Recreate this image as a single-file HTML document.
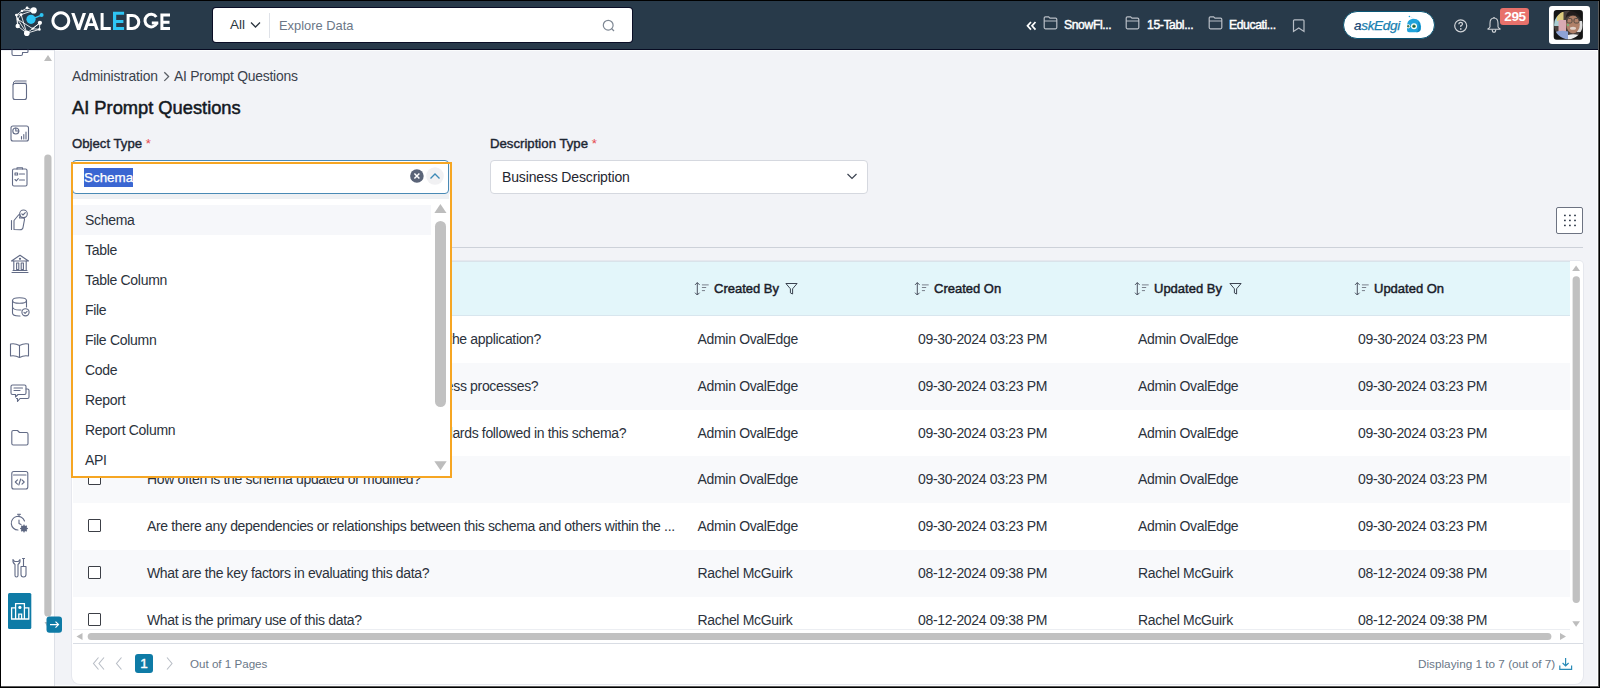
<!DOCTYPE html>
<html><head><meta charset="utf-8">
<style>
*{box-sizing:border-box;margin:0;padding:0}
html,body{width:1600px;height:688px;overflow:hidden;background:#000}
body{font-family:"Liberation Sans",sans-serif;position:relative;color:#222}
.a{position:absolute}
.t{position:absolute;white-space:nowrap;line-height:1}
#page{position:absolute;left:1px;top:50px;width:1597px;height:636px;background:#f2f3f7}
#hdr{position:absolute;left:1px;top:1px;width:1597px;height:48px;background:#283a4a}
#hline{position:absolute;left:1px;top:49px;width:1597px;height:1px;background:#070b22}
#side{position:absolute;left:1px;top:50px;width:54px;height:636px;background:#fff;border-right:1px solid #dde0e7}
.sb-ico{position:absolute;left:11px;width:18px;height:18px}
.lbl{font-size:13.2px;color:#1d2633;-webkit-text-stroke:0.4px #1d2633}
.req{color:#e5484d;-webkit-text-stroke:0}
.cell{font-size:14px;color:#2b323c;letter-spacing:-0.34px}
.hcell{font-size:13px;color:#1a2029;-webkit-text-stroke:0.45px #1a2029}
.row{position:absolute;left:73px;width:1497px;height:47px}
.cb{position:absolute;left:15px;width:13px;height:13px;border:1.3px solid #3c3f46;border-radius:1px;background:#fff}
.dd-item{position:absolute;left:85px;font-size:14px;color:#2b323c;letter-spacing:-0.3px}
</style></head>
<body>
<div id="hdr"></div>
<!-- logo -->
<svg class="a" style="left:0;top:0" width="50" height="42" viewBox="0 0 50 42">
 <g stroke="#fff" stroke-width="0.85" stroke-linecap="round">
<line x1="16.4" y1="15.1" x2="21.9" y2="10.9"/>
<line x1="21.9" y1="10.9" x2="27.1" y2="8.0"/>
<line x1="27.1" y1="8.0" x2="33.7" y2="10.4"/>
<line x1="21.1" y1="14.6" x2="33.7" y2="10.4"/>
<line x1="21.9" y1="10.9" x2="33.7" y2="10.4"/>
<line x1="16.4" y1="15.1" x2="21.1" y2="14.6"/>
<line x1="16.4" y1="15.1" x2="17.7" y2="19.3"/>
<line x1="17.7" y1="19.3" x2="26.8" y2="33.2"/>
<line x1="21.1" y1="14.6" x2="17.7" y2="19.3"/>
<line x1="17.7" y1="26" x2="26.8" y2="33.2"/>
<line x1="17.7" y1="19.3" x2="17.7" y2="26"/>
<line x1="17.7" y1="19.3" x2="32.7" y2="28.7"/>
<line x1="32.7" y1="28.7" x2="39.9" y2="22.8"/>
<line x1="26.8" y1="33.2" x2="39.4" y2="29.4"/>
<line x1="39.4" y1="29.4" x2="39.9" y2="22.8"/>
<line x1="26.8" y1="33.2" x2="39.9" y2="22.8"/>
<line x1="32.7" y1="28.7" x2="39.4" y2="29.4"/>
<line x1="16.4" y1="15.1" x2="17.7" y2="26"/>
<line x1="21.1" y1="14.6" x2="26.8" y2="33.2"/>
</g><g fill="#fff">
<circle cx="33.7" cy="10.4" r="3.1"/>
<circle cx="27.1" cy="8.0" r="1.4"/>
<circle cx="21.9" cy="10.9" r="1.2"/>
<circle cx="16.4" cy="15.1" r="1.4"/>
<circle cx="21.1" cy="14.6" r="1.4"/>
<circle cx="17.7" cy="19.3" r="1.0"/>
<circle cx="17.7" cy="26" r="2.2"/>
<circle cx="26.8" cy="33.2" r="2.8"/>
<circle cx="39.9" cy="22.8" r="2.1"/>
<circle cx="39.4" cy="29.4" r="1.3"/>
<circle cx="32.7" cy="28.7" r="1.1"/>
</g>
<line x1="31" y1="19.3" x2="41.6" y2="15.1" stroke="#2ec5f4" stroke-width="1.3"/><circle cx="31" cy="19.3" r="4.6" fill="#2ec5f4"/><circle cx="41.6" cy="15.1" r="2" fill="#2ec5f4"/>
</svg>
<svg class="a" style="left:0;top:0" width="180" height="40" viewBox="0 0 180 40">
 <g fill="#fff">
  <path fill-rule="evenodd" d="M60.85,11.3 A9.45,9.45 0 1 1 60.84,11.3 Z M60.85,14.3 A6.45,6.45 0 1 0 60.86,14.3 Z"/>
  <polygon points="71.2,12.9 74.5,12.9 78.7,24.6 82.7,12.9 86,12.9 80.2,29.9 77.1,29.9"/>
  <path fill-rule="evenodd" d="M89.6,13.1 H92.8 L98.9,29.9 H95.6 L94.2,26 H88.2 L86.8,29.9 H83.5 Z M91.2,17.3 L89.2,23.3 H93.2 Z"/>
  <polygon points="100.6,12.9 103.6,12.9 103.6,27 110.8,27 110.8,30 100.6,30"/>
  <path d="M126.6,13.9 H132.2 A8.1,8.05 0 0 1 132.2,30 H126.6 Z M129.6,16.9 V27 H132.2 A5.1,5.05 0 0 0 132.2,16.9 Z" fill-rule="evenodd"/>
  <path d="M156.3,17 A6.2,6.3 0 1 0 156.9,23" fill="none" stroke="#fff" stroke-width="3"/>
  <rect x="151.8" y="21.5" width="6.5" height="2.9"/>
  <polygon points="160.4,13.5 170,13.5 170,16.4 163.4,16.4 163.4,20.8 169.5,20.8 169.5,23.7 163.4,23.7 163.4,27.1 170,27.1 170,30 160.4,30"/>
 </g>
 <polygon fill="#2ec5f4" points="113,11.8 124.1,11.8 124.1,14.8 116.2,14.8 116.2,19.9 123.4,19.9 123.4,22.9 116.2,22.9 116.2,27 124.1,27 124.1,30 113,30"/>
</svg>
<!-- search -->
<div class="a" style="left:212px;top:7px;width:421px;height:36px;background:#0a0e26;border-radius:4px"></div><div class="a" style="left:213px;top:8px;width:419px;height:34px;background:#fff;border-radius:3px"></div>
<div class="t" style="left:230px;top:18px;font-size:13.5px;color:#2d3640">All</div>
<svg class="a" style="left:250px;top:21px" width="11" height="8" viewBox="0 0 11 8"><polyline points="1,1.5 5.5,6 10,1.5" fill="none" stroke="#2d3640" stroke-width="1.3"/></svg>
<div class="a" style="left:269px;top:13px;width:1px;height:25px;background:#dfe2e8"></div>
<div class="t" style="left:279px;top:19.5px;font-size:12.9px;color:#6b7787">Explore Data</div>
<svg class="a" style="left:601px;top:18px" width="16" height="16" viewBox="0 0 16 16"><circle cx="7.2" cy="7.2" r="4.9" fill="none" stroke="#7f8894" stroke-width="1.2"/><line x1="10.5" y1="10.5" x2="13" y2="13" stroke="#7f8894" stroke-width="1.2"/></svg>
<!-- tabs -->
<svg class="a" style="left:1026px;top:21px" width="11" height="10" viewBox="0 0 11 10"><polyline points="5,1 1.5,4.8 5,8.6" fill="none" stroke="#fff" stroke-width="1.7"/><polyline points="9.5,1 6,4.8 9.5,8.6" fill="none" stroke="#fff" stroke-width="1.7"/></svg>
<svg class="a" style="left:1043px;top:16px" width="15" height="14" viewBox="0 0 15 14"><path d="M1.2,2 Q1.2,0.8 2.4,0.8 H5.6 L7,2.2 H12.6 Q13.8,2.2 13.8,3.4 V11.6 Q13.8,12.8 12.6,12.8 H2.4 Q1.2,12.8 1.2,11.6 Z M1.2,5 H13.8" fill="none" stroke="#b8bec6" stroke-width="1.2"/></svg>
<div class="t" style="left:1064px;top:19px;font-size:12.2px;color:#fff;letter-spacing:-0.4px;-webkit-text-stroke:0.45px #fff">SnowFl...</div>
<svg class="a" style="left:1125px;top:16px" width="15" height="14" viewBox="0 0 15 14"><path d="M1.2,2 Q1.2,0.8 2.4,0.8 H5.6 L7,2.2 H12.6 Q13.8,2.2 13.8,3.4 V11.6 Q13.8,12.8 12.6,12.8 H2.4 Q1.2,12.8 1.2,11.6 Z M1.2,5 H13.8" fill="none" stroke="#b8bec6" stroke-width="1.2"/></svg>
<div class="t" style="left:1147px;top:19px;font-size:12.2px;color:#fff;letter-spacing:-0.4px;-webkit-text-stroke:0.45px #fff">15-Tabl...</div>
<svg class="a" style="left:1208px;top:16px" width="15" height="14" viewBox="0 0 15 14"><path d="M1.2,2 Q1.2,0.8 2.4,0.8 H5.6 L7,2.2 H12.6 Q13.8,2.2 13.8,3.4 V11.6 Q13.8,12.8 12.6,12.8 H2.4 Q1.2,12.8 1.2,11.6 Z M1.2,5 H13.8" fill="none" stroke="#b8bec6" stroke-width="1.2"/></svg>
<div class="t" style="left:1229px;top:19px;font-size:12.2px;color:#fff;letter-spacing:-0.4px;-webkit-text-stroke:0.45px #fff">Educati...</div>
<svg class="a" style="left:1292px;top:19px" width="14" height="14" viewBox="0 0 14 14"><path d="M1.5,1.8 Q1.5,0.8 2.5,0.8 H11 Q12,0.8 12,1.8 V12.5 L6.75,9 L1.5,12.5 Z" fill="none" stroke="#b8bec6" stroke-width="1.2"/></svg>
<!-- askEdgi -->
<div class="a" style="left:1343px;top:11px;width:92px;height:28px;border-radius:14px;background:#fff;border:1.2px solid #0a5675"></div>
<div class="t" style="left:1354px;top:19px;font-size:13.5px;font-style:italic;color:#1780b0;letter-spacing:-0.3px;-webkit-text-stroke:0.25px #1780b0"><span style="color:#1d2350">a</span>skEdgi</div>
<svg class="a" style="left:1400px;top:12px" width="28" height="24" viewBox="1400 12 28 24">
 <path d="M1407.2,24 Q1408,19 1413.5,18.8 Q1420.5,18.8 1421,26.5 Q1421.3,32.3 1415,32.3 H1409 Q1407,32.3 1407,30 Z" fill="#1fa3db"/>
 <path d="M1418,21 Q1421,24 1420.6,30 Q1419.8,32.3 1416,32.3 Q1420,30 1418,21Z" fill="#0d88c0"/>
 <circle cx="1414" cy="26.3" r="3" fill="#fff"/><circle cx="1414" cy="26.3" r="1.8" fill="#3f8f55"/><circle cx="1414" cy="26.3" r="0.8" fill="#1d2a2a"/>
 <circle cx="1408.2" cy="26.3" r="2.1" fill="#fff"/><circle cx="1408.2" cy="26.3" r="1.2" fill="#4a7a50"/>
 <circle cx="1409.4" cy="16.5" r="0.8" fill="#1fa3db"/>
 <path d="M1410.5,16.8 Q1412.5,17.2 1412.8,18.8" fill="none" stroke="#bfe3f2" stroke-width="0.6"/>
</svg>
<!-- help -->
<svg class="a" style="left:1453px;top:18px" width="16" height="16" viewBox="0 0 16 16"><circle cx="7.7" cy="7.8" r="6" fill="none" stroke="#d0d3d7" stroke-width="1.2"/><path d="M5.9,6.3 Q5.9,4.4 7.7,4.4 Q9.5,4.4 9.5,6 Q9.5,7.1 7.8,7.8 V8.9" fill="none" stroke="#d0d3d7" stroke-width="1.3"/><circle cx="7.8" cy="10.9" r="0.85" fill="#d0d3d7"/></svg>
<!-- bell -->
<svg class="a" style="left:1486px;top:16px" width="16" height="18" viewBox="0 0 16 18"><path d="M8,2 Q12,2 12,7.5 V10.8 Q12,11.8 14,12.8 V13.2 H2 V12.8 Q4,11.8 4,10.8 V7.5 Q4,2 8,2 Z" fill="none" stroke="#d0d3d7" stroke-width="1.1" stroke-linejoin="round"/><path d="M6.2,13.6 Q6.4,16.3 8,16.3 Q9.6,16.3 9.8,13.6" fill="none" stroke="#d0d3d7" stroke-width="1.1"/><circle cx="8" cy="1.8" r="0.8" fill="#d0d3d7"/></svg>
<div class="a" style="left:1500px;top:8px;width:29px;height:17px;background:#e8716b;border-radius:3px"></div>
<div class="t" style="left:1502px;top:10px;font-size:13.5px;font-weight:bold;color:#fff;width:26px;text-align:center;letter-spacing:-0.3px">295</div>
<!-- avatar -->
<div class="a" style="left:1549px;top:6px;width:41px;height:38px;background:#fff;border-radius:3px"></div>
<svg class="a" style="left:1553px;top:9px" width="31" height="32" viewBox="1553 9 31 32">
 <defs><clipPath id="avc"><circle cx="1568.3" cy="25" r="14.2"/></clipPath><filter id="avb" x="-20%" y="-20%" width="140%" height="140%"><feGaussianBlur stdDeviation="0.7"/></filter></defs>
 <rect x="1553.7" y="10" width="29.2" height="29.7" rx="3" fill="#151515"/>
 <g clip-path="url(#avc)"><g filter="url(#avb)">
  <rect x="1553" y="9" width="31" height="32" fill="#4a403c"/>
  <rect x="1553" y="14" width="6" height="12" fill="#a9cdd2"/>
  <rect x="1557" y="12" width="6.5" height="9" fill="#dccb7e"/>
  <rect x="1558.5" y="20" width="7.5" height="13" fill="#d8aab2"/>
  <rect x="1577" y="21" width="7" height="11" fill="#dcdcdc"/>
  <rect x="1576" y="9" width="8" height="12" fill="#2a2a2a"/>
  <ellipse cx="1573" cy="24.5" rx="6.8" ry="9" fill="#b08068"/>
  <path d="M1565.5,19 Q1566,10.5 1573,10.5 Q1580.5,10.5 1580.5,18 L1579,16.5 Q1573,14 1567,16.5 Z" fill="#221d1b"/>
  <g fill="none" stroke="#4b4440" stroke-width="0.9"><rect x="1567" y="18.5" width="5" height="4.5" rx="1.5"/><rect x="1574" y="18.5" width="5" height="4.5" rx="1.5"/></g>
  <ellipse cx="1573" cy="28.3" rx="3" ry="1.5" fill="#e2d2ca"/>
  <circle cx="1568" cy="25" r="1.2" fill="#7fb07a"/>
  <path d="M1553,41 V33 Q1560,29.5 1568,31.5 V41 Z" fill="#8ea3d6"/>
  <path d="M1568,41 V35 Q1573,33.5 1579,35 V41 Z" fill="#eeeeee"/>
  <path d="M1579,41 V33 L1584,32 V41 Z" fill="#262626"/>
 </g></g>
</svg>

<div id="hline"></div>
<div id="page"></div>
<div id="side"></div>
<div class="a" style="left:1px;top:50px;width:53px;height:1px;background:#eef0f4"></div>
<svg class="a" style="left:0;top:44px" width="65" height="600" viewBox="0 44 65 600">
 <g fill="none" stroke="#626b86" stroke-width="1.1" stroke-linecap="round" stroke-linejoin="round">
  <!-- partial top icon -->
  <path d="M12,50 V54 Q12,55.5 13.5,55.5 H21 Q22.5,55.5 22.5,54 V52.5 H27 Q28,52.5 28,51.5 V50"/>
  <!-- book -->
  <rect x="13" y="83.5" width="13.5" height="16" rx="2"/>
  <path d="M13.2,84.5 Q13.2,81 15,81 H26.2 M15.2,83.2 H26.2" stroke-width="1"/>
  <!-- dashboard -->
  <rect x="11" y="126" width="17.5" height="15" rx="2"/>
  <circle cx="15.8" cy="131" r="3"/>
  <path d="M15.8,128 V131 H18.8 M21.5,139 V136.5 M23.8,139 V134.5 M26,139 V132"/>
  <!-- clipboard -->
  <rect x="12.5" y="169" width="14.5" height="17" rx="1.5"/>
  <path d="M17,169 V167.8 H22.5 V169"/>
  <rect x="15" y="173" width="2.6" height="2" />
  <path d="M19.5,174 H24.5 M15,179.5 L16.3,180.8 L18.3,178.6 M19.5,180 H24.5"/>
  <!-- hand check -->
  <circle cx="23.5" cy="213.8" r="3.8"/>
  <path d="M21.8,213.8 L23,215 L25.3,212.6"/>
  <path d="M11.5,220.5 V229.5 M14,220.5 V229.5 L20,229.8 Q22.8,229.8 23,227.5 L24.5,219.5 Q24.7,218 23,218 H19.5 L20.2,215.5 Q20,214 18.5,215 L14,220.5"/>
  <!-- bank -->
  <path d="M11.5,261 L20,255.2 L28.5,261 Z M12,272.5 H28 M13,270.5 H27 M13.8,261.5 V270.5 M26.2,261.5 V270.5"/><rect x="16.6" y="263" width="2.2" height="6.5"/><rect x="21.2" y="263" width="2.2" height="6.5"/>
  <circle cx="20" cy="258.8" r="0.6"/>
  <!-- db check -->
  <ellipse cx="19.5" cy="300.5" rx="7" ry="2.8"/>
  <path d="M12.5,300.5 V313 Q12.5,316 19,316 H20 M12.5,307 Q13,310 19.5,310 H21 M26.5,300.5 V307"/>
  <circle cx="25.5" cy="312.3" r="3.6"/>
  <path d="M24,312.3 L25.1,313.4 L27.1,311.3"/>
  <!-- open book -->
  <path d="M19.5,345.5 Q15,343 10.5,344 V356 Q15,355 19.5,357.5 Q24,355 28.5,356 V344 Q24,343 19.5,345.5 Z M19.5,345.5 V357.5"/>
  <!-- chat -->
  <path d="M12.5,385 H24.5 Q26,385 26,386.5 V393 Q26,394.5 24.5,394.5 H18 L15.5,397 V394.5 H12.5 Q11,394.5 11,393 V386.5 Q11,385 12.5,385 Z"/>
  <path d="M26,389 H27.5 Q29,389 29,390.5 V397 Q29,398.5 27.5,398.5 H20 L17.5,401.5 V398.5 H16.5 M14,388 H22.5 M14,390.5 H20"/>
  <!-- folder -->
  <path d="M11.8,432 Q11.8,430.5 13.3,430.5 H17.5 L19.5,432.5 H26.5 Q28,432.5 28,434 V443.5 Q28,445 26.5,445 H13.3 Q11.8,445 11.8,443.5 Z"/>
  <!-- code -->
  <rect x="11.8" y="471.5" width="16" height="17.5" rx="2"/>
  <path d="M13.5,475 H26 M17.5,479.8 L15.3,482 L17.5,484.2 M22,479.8 L24.2,482 L22,484.2 M20.7,479 L18.8,485"/>
  <!-- timer -->
  <path d="M24.5,521 A6.8,6.8 0 1 0 18,530"/>
  <path d="M17.5,514.3 H20.5 M19,514.3 V516.5 M19,520 V523.5 L21,524.5"/>
 </g>
 <circle cx="24" cy="528.5" r="3" fill="#5d6781"/>
 <g fill="#5d6781"><rect x="23.4" y="524.6" width="1.2" height="7.8"/><rect x="20.1" y="527.9" width="7.8" height="1.2"/><rect x="23.4" y="524.6" width="1.2" height="7.8" transform="rotate(45 24 528.5)"/><rect x="23.4" y="524.6" width="1.2" height="7.8" transform="rotate(-45 24 528.5)"/></g>
 <g fill="none" stroke="#626b86" stroke-width="1.1" stroke-linecap="round" stroke-linejoin="round">
  <!-- tools -->
  <path d="M13,559.5 Q12.5,563 15,564.5 V575.5 Q15,577 16.5,577 Q18,577 18,575.5 V564.5 Q20.5,563 20,559.5 L18.3,561.5 H14.7 Z"/>
  <path d="M23.5,558.5 V566 M22.5,558.5 H24.5 M21,566.5 H26 V574.5 Q26,577 23.5,577 Q21,577 21,574.5 Z"/>
 </g>
 <!-- active -->
 <rect x="8" y="593" width="23.3" height="36" rx="1.5" fill="#0e7ba6"/>
 <g fill="none" stroke="#fff" stroke-width="1.3">
  <path d="M11.6,619 V607.8 H15.6 M28.8,619 V607.8 H24.4 M15.6,619 V603.6 H24.4 V619 M11,619 H29.4 M18.8,619 V614.2 H21.6 V619"/>
 </g>
 <circle cx="19.9" cy="607.4" r="1.6" fill="#fff"/>
 <!-- scrollbar -->
 <path d="M44,61 L48,55 L52,61 Z" fill="#bdbdbd"/>
 <rect x="44.3" y="154.5" width="7.2" height="462" rx="3.6" fill="#c1c1c1"/>
 <path d="M44.5,622 L48,628 L51.5,622 Z" fill="#bdbdbd"/>
 <rect x="46.5" y="616.5" width="15.5" height="16.2" rx="3" fill="#0e7ba6"/>
 <path d="M50,624.6 H58.5 M55.5,621.6 L58.5,624.6 L55.5,627.6" fill="none" stroke="#fff" stroke-width="1.2"/>
</svg>


<!-- breadcrumb & title -->
<div class="t" style="left:72px;top:70px;font-size:13.9px;color:#3a414c;letter-spacing:-0.16px">Administration</div><svg class="a" style="left:162px;top:70px" width="10" height="13" viewBox="0 0 10 13"><polyline points="2.3,2.3 6.6,6.6 2.3,10.9" fill="none" stroke="#5a5f66" stroke-width="1.3"/></svg><div class="t" style="left:174px;top:70px;font-size:13.9px;color:#3a414c;letter-spacing:-0.24px">AI Prompt Questions</div>
<div class="t" style="left:72px;top:99px;font-size:18.3px;color:#14191f;-webkit-text-stroke:0.5px #14191f">AI Prompt Questions</div>
<div class="t lbl" style="left:72px;top:137px">Object Type <span class="req">*</span></div>
<div class="t lbl" style="left:490px;top:137px">Description Type <span class="req">*</span></div>
<!-- description select -->
<div class="a" style="left:490px;top:160px;width:378px;height:34px;background:#fff;border:1px solid #d5d8df;border-radius:4px"></div>
<div class="t" style="left:502px;top:170px;font-size:14px;color:#1f2630;letter-spacing:-0.15px">Business Description</div>
<svg class="a" style="left:846px;top:172px" width="12" height="9" viewBox="0 0 12 9"><polyline points="1.5,2 6,6.5 10.5,2" fill="none" stroke="#3b4350" stroke-width="1.2"/></svg>
<!-- column chooser -->
<div class="a" style="left:1556px;top:207px;width:27px;height:27px;background:#fff;border:1px solid #6d7382;border-radius:2px"></div>
<svg class="a" style="left:1556px;top:207px" width="27" height="27" viewBox="0 0 27 27"><g fill="#1e2a3a"><rect x="8.1" y="7.7" width="1.6" height="1.5"/><rect x="13.1" y="7.7" width="1.6" height="1.5"/><rect x="18.2" y="7.7" width="1.6" height="1.5"/><rect x="8.1" y="12.700000000000001" width="1.6" height="1.5"/><rect x="13.1" y="12.700000000000001" width="1.6" height="1.5"/><rect x="18.2" y="12.700000000000001" width="1.6" height="1.5"/><rect x="8.1" y="17.7" width="1.6" height="1.5"/><rect x="13.1" y="17.7" width="1.6" height="1.5"/><rect x="18.2" y="17.7" width="1.6" height="1.5"/></g></svg>
<div class="a" style="left:73px;top:247px;width:1510px;height:1px;background:#cdd1d9"></div>
<!-- card -->
<div class="a" style="left:72px;top:261px;width:1511px;height:423px;background:#fff;border-radius:4px 4px 8px 8px;box-shadow:0 0 0 1px #e6e8ee"></div>
<div class="a" style="left:73px;top:261px;width:1497px;height:55px;background:#e3f6fa;border-top:1px solid #d9e3ea;border-bottom:1px solid #d8e6ee"></div>
<svg class="a" style="left:693px;top:281px" width="16" height="15" viewBox="0 0 16 15"><path d="M4.3,1.6 V14 M2,3.9 L4.3,1.6 L6.6,3.9 M2,11.7 L4.3,14 L6.6,11.7" fill="none" stroke="#4a5260" stroke-width="1"/><path d="M8.9,3.9 H15.7 M8.9,6.5 H13.2 M8.9,9.6 H12" fill="none" stroke="#7a818c" stroke-width="1"/></svg><div class="t hcell" style="left:714px;top:282px">Created By</div><svg class="a" style="left:785px;top:282px" width="13" height="13" viewBox="0 0 13 13"><path d="M0.9,1.5 H12.1 L7.6,6.8 V12 L5.4,10.9 V6.8 Z" fill="none" stroke="#3b4350" stroke-width="1" stroke-linejoin="round"/></svg><svg class="a" style="left:913px;top:281px" width="16" height="15" viewBox="0 0 16 15"><path d="M4.3,1.6 V14 M2,3.9 L4.3,1.6 L6.6,3.9 M2,11.7 L4.3,14 L6.6,11.7" fill="none" stroke="#4a5260" stroke-width="1"/><path d="M8.9,3.9 H15.7 M8.9,6.5 H13.2 M8.9,9.6 H12" fill="none" stroke="#7a818c" stroke-width="1"/></svg><div class="t hcell" style="left:934px;top:282px">Created On</div><svg class="a" style="left:1133px;top:281px" width="16" height="15" viewBox="0 0 16 15"><path d="M4.3,1.6 V14 M2,3.9 L4.3,1.6 L6.6,3.9 M2,11.7 L4.3,14 L6.6,11.7" fill="none" stroke="#4a5260" stroke-width="1"/><path d="M8.9,3.9 H15.7 M8.9,6.5 H13.2 M8.9,9.6 H12" fill="none" stroke="#7a818c" stroke-width="1"/></svg><div class="t hcell" style="left:1154px;top:282px">Updated By</div><svg class="a" style="left:1229px;top:282px" width="13" height="13" viewBox="0 0 13 13"><path d="M0.9,1.5 H12.1 L7.6,6.8 V12 L5.4,10.9 V6.8 Z" fill="none" stroke="#3b4350" stroke-width="1" stroke-linejoin="round"/></svg><svg class="a" style="left:1353px;top:281px" width="16" height="15" viewBox="0 0 16 15"><path d="M4.3,1.6 V14 M2,3.9 L4.3,1.6 L6.6,3.9 M2,11.7 L4.3,14 L6.6,11.7" fill="none" stroke="#4a5260" stroke-width="1"/><path d="M8.9,3.9 H15.7 M8.9,6.5 H13.2 M8.9,9.6 H12" fill="none" stroke="#7a818c" stroke-width="1"/></svg><div class="t hcell" style="left:1374px;top:282px">Updated On</div><div class="a" style="left:73px;top:316px;width:1497px;height:314px;overflow:hidden"><div class="a" style="left:0;top:0px;width:1497px;height:47px;background:#fff"><div class="cb" style="top:16px"></div><div class="t cell" style="right:1029px;top:16px">What is the primary purpose of this schema within the application?</div><div class="t cell" style="left:624.6px;top:16px">Admin OvalEdge</div><div class="t cell" style="left:845px;top:16px">09-30-2024 03:23 PM</div><div class="t cell" style="left:1065px;top:16px">Admin OvalEdge</div><div class="t cell" style="left:1285px;top:16px">09-30-2024 03:23 PM</div></div><div class="a" style="left:0;top:47px;width:1497px;height:47px;background:#f8f9fb"><div class="cb" style="top:16px"></div><div class="t cell" style="right:1031.7px;top:16px">How does this schema support the critical business processes?</div><div class="t cell" style="left:624.6px;top:16px">Admin OvalEdge</div><div class="t cell" style="left:845px;top:16px">09-30-2024 03:23 PM</div><div class="t cell" style="left:1065px;top:16px">Admin OvalEdge</div><div class="t cell" style="left:1285px;top:16px">09-30-2024 03:23 PM</div></div><div class="a" style="left:0;top:93.69999999999999px;width:1497px;height:47px;background:#fff"><div class="cb" style="top:16px"></div><div class="t cell" style="right:943.8px;top:16px">Are there any specific naming conventions or standards followed in this schema?</div><div class="t cell" style="left:624.6px;top:16px">Admin OvalEdge</div><div class="t cell" style="left:845px;top:16px">09-30-2024 03:23 PM</div><div class="t cell" style="left:1065px;top:16px">Admin OvalEdge</div><div class="t cell" style="left:1285px;top:16px">09-30-2024 03:23 PM</div></div><div class="a" style="left:0;top:140.39999999999998px;width:1497px;height:47px;background:#f8f9fb"><div class="cb" style="top:16px"></div><div class="t cell" style="left:74px;top:16px">How often is the schema updated or modified?</div><div class="t cell" style="left:624.6px;top:16px">Admin OvalEdge</div><div class="t cell" style="left:845px;top:16px">09-30-2024 03:23 PM</div><div class="t cell" style="left:1065px;top:16px">Admin OvalEdge</div><div class="t cell" style="left:1285px;top:16px">09-30-2024 03:23 PM</div></div><div class="a" style="left:0;top:187px;width:1497px;height:47px;background:#fff"><div class="cb" style="top:16px"></div><div class="t cell" style="left:74px;top:16px">Are there any dependencies or relationships between this schema and others within the ...</div><div class="t cell" style="left:624.6px;top:16px">Admin OvalEdge</div><div class="t cell" style="left:845px;top:16px">09-30-2024 03:23 PM</div><div class="t cell" style="left:1065px;top:16px">Admin OvalEdge</div><div class="t cell" style="left:1285px;top:16px">09-30-2024 03:23 PM</div></div><div class="a" style="left:0;top:233.79999999999995px;width:1497px;height:47px;background:#f8f9fb"><div class="cb" style="top:16px"></div><div class="t cell" style="left:74px;top:16px">What are the key factors in evaluating this data?</div><div class="t cell" style="left:624.6px;top:16px">Rachel McGuirk</div><div class="t cell" style="left:845px;top:16px">08-12-2024 09:38 PM</div><div class="t cell" style="left:1065px;top:16px">Rachel McGuirk</div><div class="t cell" style="left:1285px;top:16px">08-12-2024 09:38 PM</div></div><div class="a" style="left:0;top:280.5px;width:1497px;height:47px;background:#fff"><div class="cb" style="top:16px"></div><div class="t cell" style="left:74px;top:16px">What is the primary use of this data?</div><div class="t cell" style="left:624.6px;top:16px">Rachel McGuirk</div><div class="t cell" style="left:845px;top:16px">08-12-2024 09:38 PM</div><div class="t cell" style="left:1065px;top:16px">Rachel McGuirk</div><div class="t cell" style="left:1285px;top:16px">08-12-2024 09:38 PM</div></div></div>
<div class="a" style="left:73px;top:629px;width:1497px;height:1px;background:#eceef2"></div>
<!-- v scrollbar -->
<path/>
<svg class="a" style="left:1570px;top:261px" width="13" height="383" viewBox="1570 261 13 383">
 <path d="M1572.2,271 L1576.1,265.4 L1580,271 Z" fill="#bdbdbd"/>
 <rect x="1572.6" y="276.3" width="7.3" height="326.6" rx="3.6" fill="#c1c1c1"/>
 <path d="M1572.3,621.2 L1576.1,626.8 L1580,621.2 Z" fill="#bdbdbd"/>
</svg>
<!-- h scrollbar -->
<svg class="a" style="left:73px;top:630px" width="1497" height="14" viewBox="73 630 1497 14">
 <path d="M82.5,633 L76.5,636.5 L82.5,640 Z" fill="#bdbdbd"/>
 <rect x="87.7" y="633" width="1463.7" height="7" rx="3.5" fill="#c1c1c1"/>
 <path d="M1560,633 L1566,636.5 L1560,640 Z" fill="#bdbdbd"/>
</svg>
<div class="a" style="left:73px;top:643px;width:1510px;height:1px;background:#d9dde4"></div>
<!-- pagination -->
<svg class="a" style="left:88px;top:654px" width="90" height="20" viewBox="88 654 90 20">
 <g fill="none" stroke="#b9bec6" stroke-width="1.1">
  <polyline points="98.5,657.5 93.5,663.5 98.5,669.5"/><polyline points="104,657.5 99,663.5 104,669.5"/>
  <polyline points="121.5,657.5 116.5,663.5 121.5,669.5"/>
  <polyline points="167,657.5 172,663.5 167,669.5"/>
 </g>
</svg>
<div class="a" style="left:135px;top:654px;width:18px;height:19px;background:#0e7ba6;border-radius:3px"></div>
<div class="t" style="left:135px;top:657px;width:18px;text-align:center;font-size:13.5px;color:#fff;-webkit-text-stroke:0.4px #fff">1</div>
<div class="t" style="left:190px;top:657.5px;font-size:11.6px;color:#6a7787">Out of 1 Pages</div>
<div class="t" style="left:1418px;top:657.5px;font-size:11.75px;color:#6a7787">Displaying 1 to 7 (out of 7)</div>
<svg class="a" style="left:1558px;top:656px" width="16" height="16" viewBox="0 0 16 16"><path d="M7.6,2 V10 M4.6,7 L7.6,10 L10.6,7 M1.8,9.5 V13.3 H13.6 V9.5" fill="none" stroke="#2a8bb8" stroke-width="1.2"/></svg>


<!-- object type dropdown -->
<div class="a" style="left:72px;top:160px;width:377px;height:34px;background:#fff;border:1px solid #4a8ab5;border-radius:4px"></div>
<div class="a" style="left:73px;top:194px;width:377px;height:282px;background:#fff"></div>
<div class="a" style="left:73px;top:194px;width:376px;height:5px;background:#eef0f3"></div>
<div class="a" style="left:73px;top:205px;width:358px;height:30px;background:#f6f7fa"></div>
<div class="a" style="left:84px;top:168px;width:49px;height:19px;background:#3a66d2"></div>
<div class="t" style="left:84px;top:171px;font-size:13.4px;color:#fff;-webkit-text-stroke:0.25px #fff">Schema</div>
<svg class="a" style="left:408px;top:167px" width="40" height="20" viewBox="408 167 40 20">
 <circle cx="416.9" cy="176" r="6.8" fill="#5a6478"/>
 <path d="M414.4,173.5 L419.4,178.5 M419.4,173.5 L414.4,178.5" stroke="#fff" stroke-width="1.5"/>
 <circle cx="435" cy="176" r="8.8" fill="#f1f1f3"/>
 <polyline points="430.5,178.5 435,174 439.5,178.5" fill="none" stroke="#3d8ab6" stroke-width="1.3"/>
</svg>
<div class="t dd-item" style="top:213px">Schema</div><div class="t dd-item" style="top:243px">Table</div><div class="t dd-item" style="top:273px">Table Column</div><div class="t dd-item" style="top:303px">File</div><div class="t dd-item" style="top:333px">File Column</div><div class="t dd-item" style="top:363px">Code</div><div class="t dd-item" style="top:393px">Report</div><div class="t dd-item" style="top:423px">Report Column</div><div class="t dd-item" style="top:453px">API</div>
<svg class="a" style="left:430px;top:200px" width="20" height="276" viewBox="430 200 20 276">
 <path d="M434.4,213 L440.4,204 L446.5,213 Z" fill="#bdbdbd"/>
 <rect x="435" y="221" width="11" height="186" rx="5.5" fill="#c1c1c1"/>
 <path d="M434.3,461.2 L440.5,470.2 L446.7,461.2 Z" fill="#bdbdbd"/>
</svg>
<div class="a" style="left:71px;top:162px;width:381px;height:316px;border:2px solid #f6a623;border-top-width:2px"></div>


<div class="a" style="left:55px;top:50px;width:1543px;height:1px;background:#fbfcfd"></div>
<div class="a" style="left:1597px;top:50px;width:1px;height:636px;background:#fbfcfd"></div>
<div class="a" style="left:55px;top:685px;width:1543px;height:1px;background:#fbfcfd"></div>
<div class="a" style="left:1px;top:686px;width:1598px;height:1px;background:#5a5a5a"></div>
<div class="a" style="left:1598px;top:1px;width:1px;height:686px;background:#5a5a5a"></div>
</body></html>
